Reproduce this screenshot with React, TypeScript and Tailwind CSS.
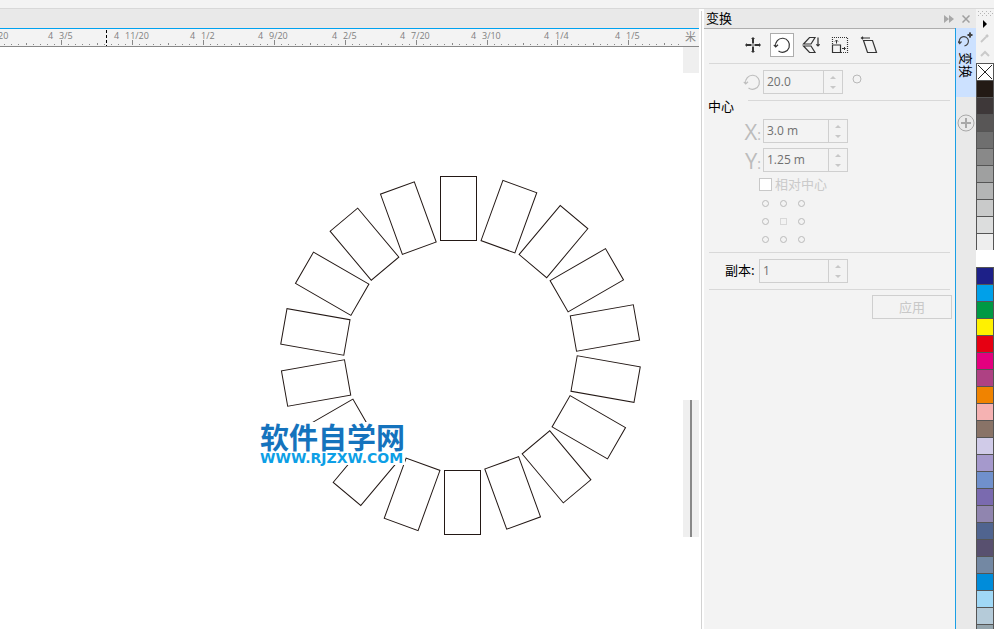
import React from "react";

const SANS = "font-['Open_Sans','Noto_Sans_CJK_SC',sans-serif]";
const CJK = "font-['Noto_Sans_CJK_SC',sans-serif]";

const majors = [
  { tick: -10, whole: null, frac: -2, label: "20" },
  { tick: 61, whole: 48, frac: 59, label: "3/5" },
  { tick: 132, whole: 114, frac: 125, label: "11/20" },
  { tick: 203, whole: 190, frac: 201, label: "1/2" },
  { tick: 274, whole: 258, frac: 269, label: "9/20" },
  { tick: 345, whole: 332, frac: 343, label: "2/5" },
  { tick: 416, whole: 400, frac: 411, label: "7/20" },
  { tick: 487, whole: 471, frac: 482, label: "3/10" },
  { tick: 557, whole: 544, frac: 555, label: "1/4" },
  { tick: 628, whole: 615, frac: 626, label: "1/5" },
];

function Ruler() {
  return (
    <div className="flex h-[18px] border-b border-[#888] bg-[#f3f3f3]">
      <svg className={`h-[17px] min-w-0 flex-1 ${SANS}`} shapeRendering="crispEdges">
        {majors.map((m) => (
          <g key={m.tick}>
            <rect x={m.tick} y={11} width={1} height={5} fill="#888" />
            {[1, 2, 3, 4, 5, 6, 7, 8, 9].map((i) => (
              <rect
                key={i}
                x={Math.round(m.tick + i * 7.1)}
                y={i === 5 ? 14 : 15}
                width={1}
                height={i === 5 ? 2 : 1}
                fill="#888"
              />
            ))}
            {m.whole !== null && <text x={m.whole} y={10} fontSize={9} fill="#808080">4</text>}
            <text x={m.frac} y={10} fontSize={9} fill="#808080">{m.label}</text>
          </g>
        ))}
        <path d="M106.5 1V17" stroke="#000" strokeDasharray="3 2" />
      </svg>
      <span className={`w-[14px] text-[11px] leading-[14px] text-[#888] ${CJK}`}>米</span>
    </div>
  );
}

const copies = Array.from({ length: 18 }, (_, i) => i * 20);

function Canvas() {
  return (
    <div className="flex min-h-0 flex-1 bg-white">
      <div className="relative min-w-0 flex-1 overflow-hidden">
        <svg className="h-full w-full" fill="none" stroke="#231815" strokeWidth={1}>
          {copies.map((a) => (
            <rect key={a} x={440.5} y={129.5} width={36} height={64} transform={`rotate(${a} 460.5 308.5)`} />
          ))}
        </svg>
        <div className="absolute left-[260px] top-[375px] flex flex-col bg-white">
          <span className={`h-[30px] text-[29px] font-bold leading-[29px] text-[#1573bd] ${CJK}`}>软件自学网</span>
          <span className="h-[13px] font-['DejaVu_Sans',sans-serif] text-sm font-bold leading-[13px] text-[#0d9fe6]">WWW.RJZXW.COM</span>
        </div>
      </div>
      <div className="flex w-4 flex-col">
        <div className="h-[26px] bg-[#efefef]" />
        <div className="mt-[327px] flex h-[137px] justify-center bg-[#efefef]">
          <div className="w-[2px] bg-[#888]" />
        </div>
      </div>
    </div>
  );
}

function NumberField({ label, value, id, width }: { label: string; value: string; id: string; width: string }) {
  return (
    <div className={`flex h-6 border border-[#cfcfcf] ${width}`}>
      <input
        id={id}
        aria-label={label}
        defaultValue={value}
        className={`min-w-0 flex-1 bg-transparent px-[3px] text-xs text-[#707070] outline-none ${SANS}`}
      />
      <div className="flex w-[19px] flex-col border-l border-[#cfcfcf] py-[1px]">
        <button aria-label={`${label} +`} className="flex flex-1 items-center justify-center">
          <svg width="6" height="3" fill="#c8c8c8"><path d="M0 3 3 0 6 3Z" /></svg>
        </button>
        <button aria-label={`${label} -`} className="flex flex-1 items-center justify-center">
          <svg width="6" height="3" fill="#c8c8c8"><path d="M0 0 3 3 6 0Z" /></svg>
        </button>
      </div>
    </div>
  );
}

function RotateIcon({ color }: { color: string }) {
  return (
    <svg width="18" height="18" viewBox="0 0 18 18" fill="none" stroke={color} strokeWidth="1.2">
      <path d="M2.600 10.500A7 7 0 1 1 5.500 15" />
      <path d="M.8 8.800 2.700 11 5 8.800" />
    </svg>
  );
}

const tools = [
  {
    name: "位置",
    icon: (
      <svg width="18" height="18" viewBox="0 0 18 18" fill="none" stroke="#333" strokeWidth="2">
        <path d="M9 2.500V7.500M9 10.500V15.500M2.500 9H7.500M10.500 9H15.500" />
        <path d="M7.500 2.500H10.500M7.500 15.500H10.500M2.500 7.500V10.500M15.500 7.500V10.500" strokeWidth="1" />
        <path d="M9 1V2M9 16V17M1 9H2M16 9H17" strokeWidth="1" />
        <path d="M7.500 9H10.500M9 7.500V10.500" strokeWidth="1" stroke="#888" />
      </svg>
    ),
  },
  { name: "旋转", icon: <RotateIcon color="#333" /> },
  {
    name: "缩放和镜像",
    icon: (
      <svg width="18" height="18" viewBox="0 0 18 18" fill="none" stroke="#333" strokeWidth="1.2">
        <path d="M13 1.500H7.500L1.500 8H9ZM1.500 10 7.500 16.500H13L9 10Z" />
        <path d="M16 1.500V10M14.300 8.300 16 10 17.700 8.300" />
      </svg>
    ),
  },
  {
    name: "大小",
    icon: (
      <svg width="18" height="18" viewBox="0 0 18 18" fill="none" stroke="#333">
        <path d="M1.500 8V1.500H16.500V16.500H10" strokeDasharray="1 1" strokeWidth="1.2" />
        <path d="M1.500 9H9.500V16.500H1.500Z" strokeWidth="1.2" />
        <path d="M5.500 7.500V4.500M4 5.500 5.500 4 7 5.500M11 12.500H14M13 11 14.500 12.500 13 14" />
      </svg>
    ),
  },
  {
    name: "倾斜",
    icon: (
      <svg width="18" height="18" viewBox="0 0 18 18" fill="none" stroke="#333" strokeWidth="1.2">
        <path d="M3.500 4.500H12.500L16.500 16.500H7.500Z" />
        <path d="M1.500 2H10M3 .8 1.500 2 3 3.200" />
      </svg>
    ),
  },
];

function Docker() {
  return (
    <section className={`flex min-w-0 flex-1 flex-col bg-[#f3f3f3] text-[13px] text-black ${CJK}`}>
      <div className="mx-[5px] flex h-[35px] gap-[5px] border-b border-[#d8d8d8] pl-8 pt-1">
        {tools.map((t, i) => (
          <button
            key={t.name}
            aria-label={t.name}
            className={
              i === 1
                ? "flex size-6 items-center justify-center border border-[#adadad] bg-white"
                : "flex size-6 items-center justify-center"
            }
          >
            {t.icon}
          </button>
        ))}
      </div>
      <div className="flex h-9 items-start pt-[6px]">
        <span className="flex h-6 w-[59px] items-center justify-end pr-[2px]"><RotateIcon color="#bdbdbd" /></span>
        <NumberField id="angle" label="角度" value="20.0" width="w-[80px]" />
        <svg className="ml-[9px] mt-1" width="10" height="10" fill="none" stroke="#b8b8b8">
          <circle cx="5" cy="5" r="4" />
        </svg>
      </div>
      <div className="flex h-[13px] pl-1 pr-[5px]">
        <h2 className="w-10 leading-[11px]">中心</h2>
        <div className="h-px flex-1 bg-[#d8d8d8]" />
      </div>
      <div className="mt-[6px] flex flex-col gap-[5px]">
        {[
          { axis: "X", value: "3.0 m" },
          { axis: "Y", value: "1.25 m" },
        ].map((r) => (
          <div key={r.axis} className="flex h-6">
            <label htmlFor={r.axis} className={`flex w-[59px] items-baseline justify-end pr-[2px] text-[22px] leading-6 text-[#bcbcbc] ${SANS}`}>
              {r.axis}<span className="text-sm">:</span>
            </label>
            <NumberField id={r.axis} label={r.axis} value={r.value} width="w-[85px]" />
          </div>
        ))}
      </div>
      <label className="mt-[6px] flex h-[13px] items-start gap-[3px] pl-[55px] text-[#cacaca]">
        <input type="checkbox" className="size-[13px] appearance-none border border-[#c8c8c8] bg-white" />
        <span className="leading-[11px]">相对中心</span>
      </label>
      <div className="ml-[58px] mt-[9px] grid w-[43px] grid-cols-3 gap-[11px]">
        {["左上", "上", "右上", "左", "中心", "右", "左下", "下", "右下"].map((p, i) => (
          <input
            key={p}
            type="radio"
            name="anchor"
            aria-label={p}
            className={
              i === 4
                ? "size-[7px] appearance-none border border-[#d8d8d8]"
                : "size-[7px] appearance-none rounded-full border border-[#bababa]"
            }
          />
        ))}
      </div>
      <div className="mx-[5px] mt-[9px] flex h-[38px] border-y border-[#d8d8d8] pt-[6px]">
        <label htmlFor="copies" className="w-[50px] pl-4 leading-[21px]">副本:</label>
        <NumberField id="copies" label="副本" value="1" width="w-[89px]" />
      </div>
      <button className="mr-[3px] mt-[5px] h-6 w-20 self-end border border-[#cfcfcf] leading-5 text-[#c8c8c8]">应用</button>
    </section>
  );
}

const swatches = [
  "#231a15", "#3e3839", "#585656", "#6f6f6f", "#898989", "#9fa0a0", "#b4b5b5", "#c9caca", "#dcdddd", "#eeeeee",
  "#ffffff", "#1d2088", "#00a0e9", "#009944", "#fff100", "#e60012", "#e4007f", "#ae4183", "#f08300", "#f5b2b2",
  "#897367", "#d0cbe8", "#a599cc", "#7090cc", "#7a6aaf", "#9085af", "#50648f", "#58506f", "#7388a3", "#008cda",
  "#a0d8f6", "#b5cbd9", "#95a5ad",
];

function Palette() {
  return (
    <aside className="flex w-[18px] flex-col overflow-hidden bg-[#f3f3f3]">
      <svg width="18" height="54" className="shrink-0" fill="none">
        <path d="M2 2.500H17M2 6.500H17" stroke="#b5b5b5" strokeDasharray="1 3" />
        <path d="M4 4.500H17" stroke="#b5b5b5" strokeDasharray="1 3" />
        <path d="M7 11V19L11 15Z" fill="#000" />
        <path d="M5 33 10 28" stroke="#c8c8c8" strokeWidth="1.800" />
        <path d="M10 28 12 26" stroke="#c8c8c8" strokeWidth="2.500" />
        <path d="M5 47 9 43 13 47" stroke="#cacaca" strokeWidth="2" />
      </svg>
      <button aria-label="无" className="h-[17px] shrink-0 border-x border-t border-[#555] bg-white">
        <svg width="16" height="16" stroke="#222"><path d="M1 1 15 15M15 1 1 15" /></svg>
      </button>
      {swatches.map((c) => (
        <button
          key={c}
          aria-label={c}
          style={{ backgroundColor: c }}
          className={
            c === "#ffffff"
              ? "h-[17px] shrink-0"
              : "h-[17px] shrink-0 border-x border-t border-[#555]"
          }
        />
      ))}
    </aside>
  );
}

export default function App() {
  return (
    <div className="flex h-screen flex-col overflow-hidden bg-white">
      <div className="h-[9px] shrink-0 border-b border-[#d8d8d8] bg-[#f3f3f3]" />
      <div className="flex min-h-0 flex-1">
        <main className="flex min-w-0 flex-1 flex-col">
          <div className="h-5 shrink-0 border-b border-[#00a2f0] bg-[#e9e9e9]" />
          <Ruler />
          <Canvas />
        </main>
        <div className="mx-[2px] mt-[2px] w-px bg-[#d2d2d2]" />
        <div className="flex w-[272px] flex-col">
          <header className="flex h-[19px] items-center bg-[#e9e9e9] pl-[2px]">
            <h1 className={`h-[19px] flex-1 text-[13px] leading-[17px] text-black ${CJK}`}>变换</h1>
            <button aria-label="折叠" className="mr-2">
              <svg width="10" height="8" fill="#a8a8a8"><path d="M0 0 5 4 0 8ZM5 0 10 4 5 8Z" /></svg>
            </button>
            <button aria-label="关闭" className="mr-[6px]">
              <svg width="8" height="8" stroke="#a0a0a0" strokeWidth="1.500"><path d="M0.500 0.500 7.500 7.500M7.500 0.500 0.500 7.500" /></svg>
            </button>
          </header>
          <div className="flex min-h-0 flex-1">
            <div className="flex min-w-0 flex-1 border-t border-[#adadad]"><Docker /></div>
            <nav className="flex w-[21px] flex-col border-l border-[#1a9fe5] bg-[#e9e9e9]">
              <button className="flex h-[69px] flex-col items-center bg-[#cce1ff] pt-1">
                <svg width="16" height="16" fill="none" stroke="#444" strokeWidth="1.200">
                  <path d="M1.600 11A4.600 4.600 0 1 1 6.500 13.800" />
                  <path d="M0 9.500 1.700 11.500 3.500 9.500" />
                  <path d="M12 0V6M9 3H15" strokeWidth="1.200" />
                  <path d="M12 1V5M10 3H14" strokeWidth="2" />
                </svg>
                <span className={`mt-1 text-[13px] leading-[18px] text-black [text-orientation:sideways] [writing-mode:vertical-rl] ${CJK}`}>变换</span>
              </button>
              <button aria-label="添加" className="mt-[17px] self-center">
                <svg width="18" height="18" fill="none" stroke="#a8a8a8">
                  <circle cx="9" cy="9" r="8" />
                  <path d="M9 4V14M4 9H14" strokeWidth="2" />
                </svg>
              </button>
            </nav>
          </div>
        </div>
        <Palette />
      </div>
    </div>
  );
}
